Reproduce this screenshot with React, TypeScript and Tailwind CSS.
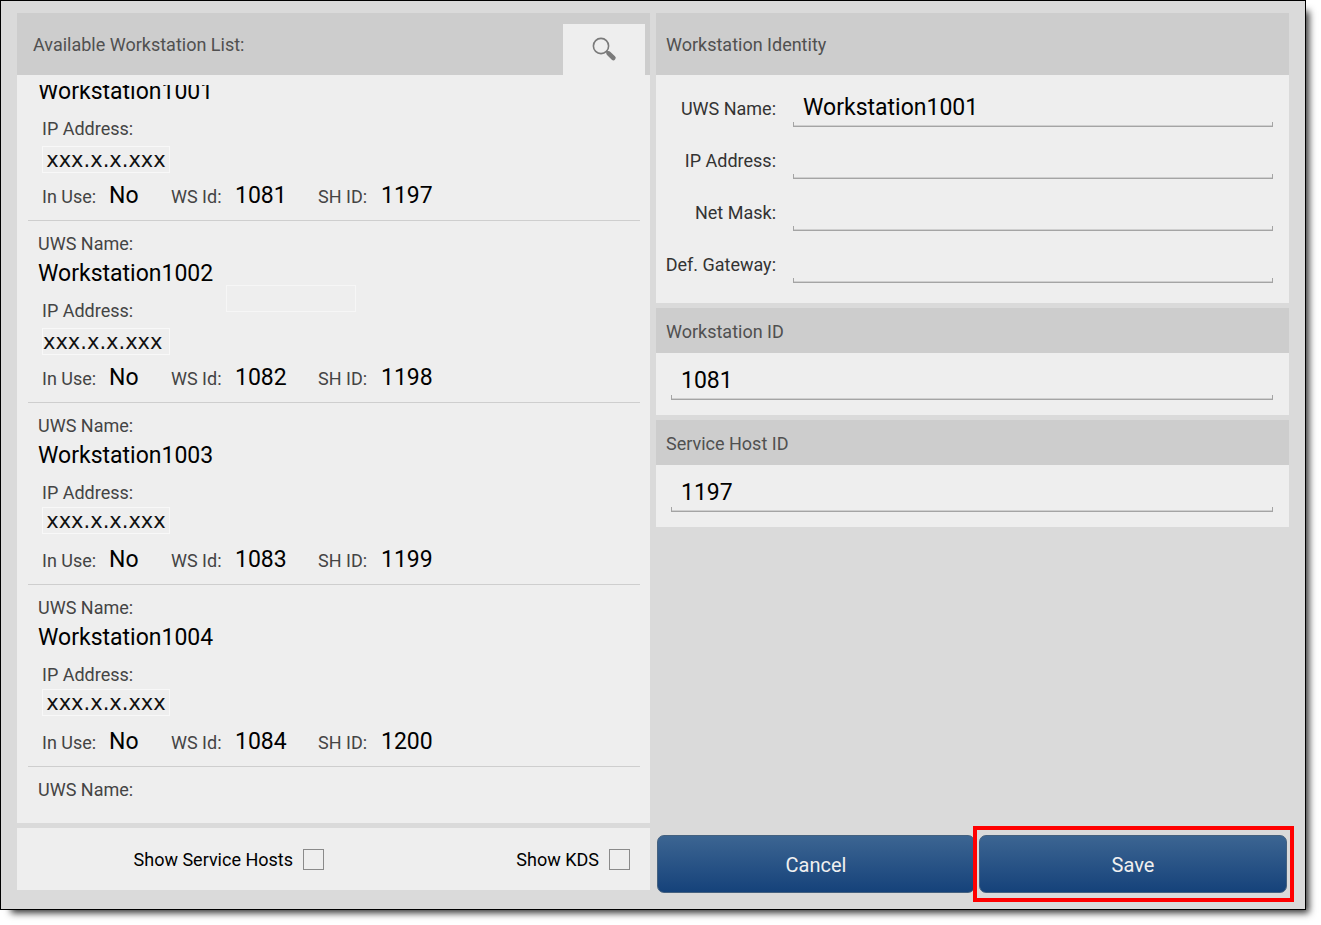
import React, { useState } from 'react';
import { clsx } from 'clsx';

interface Workstation {
  name: string;
  wsId: string;
  shId: string;
  ipClass: string;
  hasPatch?: boolean;
}

const WORKSTATIONS: Workstation[] = [
  { name: 'Workstation1001', wsId: '1081', shId: '1197', ipClass: 'self-end justify-center' },
  { name: 'Workstation1002', wsId: '1082', shId: '1198', ipClass: 'self-end justify-start', hasPatch: true },
  { name: 'Workstation1003', wsId: '1083', shId: '1199', ipClass: 'self-start justify-center' },
  { name: 'Workstation1004', wsId: '1084', shId: '1200', ipClass: 'self-start justify-center' },
];

const SearchIcon: React.FC = () => (
  <svg width="26" height="26" viewBox="0 0 26 26" fill="none" stroke="#7a7a7a" aria-hidden="true">
    <circle cx="10" cy="9" r="7.6" strokeWidth="1.6" />
    <path d="M15.4 14.2l2.4 2.2" strokeWidth="2" />
    <path d="M17.6 16.4l4.8 4.6" strokeWidth="4.6" strokeLinecap="round" />
  </svg>
);

// The first row is scrolled so that only the lower part of its name shows.
const WorkstationItem: React.FC<{ item: Workstation; isFirst: boolean }> = ({ item, isFirst }) => (
  <li
    className={clsx(
      'relative flex flex-col border-b border-[#cecece] pl-[10px]',
      isFirst ? 'h-[146px]' : 'h-[182px] pt-[11px]',
    )}
  >
    {!isFirst && <span className="h-[25px] text-lg leading-6 text-[#444]">UWS Name:</span>}
    <span className="h-8 pt-px text-[23px] leading-8 text-black">{item.name}</span>
    <div className="flex flex-col pl-1">
      <span className="mt-2 h-7 text-lg leading-7 text-[#444]">IP Address:</span>
      <div className="flex h-[30px]">
        <span
          className={clsx(
            'flex h-[27px] w-32 items-center border border-[#f8f8f8] font-["DejaVu_Sans",sans-serif] text-[21px] leading-6 text-[#111]',
            item.ipClass,
          )}
        >
          xxx.x.x.xxx
        </span>
      </div>
      <div className="mt-[7px] grid grid-cols-[67px_62px_64px_83px_63px_1fr] items-baseline text-lg leading-8 text-[#444]">
        <span>In Use:</span>
        <span className="text-[23px] leading-8 text-black">No</span>
        <span>WS Id:</span>
        <span className="text-[23px] leading-8 text-black">{item.wsId}</span>
        <span>SH ID:</span>
        <span className="text-[23px] leading-8 text-black">{item.shId}</span>
      </div>
    </div>
    {item.hasPatch && (
      <div className="absolute left-[198px] top-16 h-[27px] w-[130px] border border-[#f6f6f6]" />
    )}
  </li>
);

interface LineInputProps {
  id: string;
  value: string;
  onChange: (value: string) => void;
}

const LineInput: React.FC<LineInputProps> = ({ id, value, onChange }) => (
  <div className="relative h-10 min-w-0 flex-1">
    <input
      id={id}
      type="text"
      value={value}
      onChange={(e) => onChange(e.target.value)}
      className="h-10 w-full border-b border-[#a4a4a4] bg-transparent px-[10px] pt-[2px] text-[23px] text-black shadow-[inset_0_-1px_0_#cfcfcf] outline-none"
    />
    <div className="pointer-events-none absolute inset-x-0 bottom-0 h-[5px] border-x border-[#a4a4a4]" />
  </div>
);

const App: React.FC = () => {
  const [identity, setIdentity] = useState({
    name: 'Workstation1001',
    ip: '',
    mask: '',
    gateway: '',
  });
  const [wsId, setWsId] = useState('1081');
  const [hostId, setHostId] = useState('1197');
  const [showHosts, setShowHosts] = useState(false);
  const [showKds, setShowKds] = useState(false);

  const identityFields = [
    { key: 'name', label: 'UWS Name:' },
    { key: 'ip', label: 'IP Address:' },
    { key: 'mask', label: 'Net Mask:' },
    { key: 'gateway', label: 'Def. Gateway:' },
  ] as const;

  const filters = [
    { id: 'show-hosts', label: 'Show Service Hosts', checked: showHosts, set: setShowHosts },
    { id: 'show-kds', label: 'Show KDS', checked: showKds, set: setShowKds },
  ];

  const idPanels = [
    { id: 'ws-id', label: 'Workstation ID', value: wsId, set: setWsId },
    { id: 'host-id', label: 'Service Host ID', value: hostId, set: setHostId },
  ];

  return (
    <div className="flex h-screen bg-white pb-[15px] pr-[15px] font-[Roboto,sans-serif]">
      <main className="grid min-w-0 flex-1 grid-cols-2 gap-[6px] border border-black bg-[#dadada] px-4 pt-3 shadow-[7px_7px_7px_-4px_rgba(0,0,0,0.8)]">
        {/* Workstation list */}
        <div className="flex min-h-0 flex-col gap-[5px] pb-[19px]">
          <section className="flex min-h-0 flex-1 flex-col bg-[#eee]">
            <header className="flex h-[62px] shrink-0 items-end justify-between bg-[#cdcdcd] pl-4 pr-[5px]">
              <h2 className="self-center pt-[2px] text-lg text-[#505050]">Available Workstation List:</h2>
              <button type="button" aria-label="Search" className="flex h-[51px] w-[82px] items-center justify-center bg-[#eee]">
                <SearchIcon />
              </button>
            </header>
            <div className="mb-[15px] ml-[11px] mr-[10px] mt-[10px] min-h-0 flex-1 overflow-hidden">
              <ul className="-mt-[10px]">
                {WORKSTATIONS.map((item, index) => (
                  <WorkstationItem key={item.name} item={item} isFirst={index === 0} />
                ))}
                <li className="flex pl-[10px] pt-[11px] text-lg leading-6 text-[#444]">UWS Name:</li>
              </ul>
            </div>
          </section>
          <div className="grid h-[62px] shrink-0 grid-cols-2 bg-[#eee] pl-[11px] pr-[10px]">
            {filters.map((filter) => (
              <label key={filter.id} htmlFor={filter.id} className="flex items-center justify-end gap-[10px] pr-[10px] text-lg text-black">
                <span className="pt-[2px]">{filter.label}</span>
                <input
                  id={filter.id}
                  type="checkbox"
                  checked={filter.checked}
                  onChange={(e) => filter.set(e.target.checked)}
                  className="size-[21px] appearance-none border border-[#8a8a8a] bg-[#eee] checked:bg-[#3b6491]"
                />
              </label>
            ))}
          </div>
        </div>

        {/* Selected workstation */}
        <div className="flex min-h-0 flex-col gap-[5px] pb-4">
          <section className="bg-[#eee] pb-5">
            <header className="flex h-[62px] items-center bg-[#cdcdcd] pl-[10px] pt-[2px]">
              <h2 className="text-lg text-[#505050]">Workstation Identity</h2>
            </header>
            {identityFields.map((field) => (
              <div key={field.key} className="flex h-[52px] items-end pr-4">
                <label htmlFor={field.key} className="mr-[17px] w-[120px] text-right text-lg leading-9 text-[#333]">
                  {field.label}
                </label>
                <LineInput
                  id={field.key}
                  value={identity[field.key]}
                  onChange={(value) => setIdentity({ ...identity, [field.key]: value })}
                />
              </div>
            ))}
          </section>
          {idPanels.map((panel) => (
            <section key={panel.id} className="bg-[#eee]">
              <header className="flex h-[45px] items-center bg-[#cdcdcd] pl-[10px] pt-[2px]">
                <label htmlFor={panel.id} className="text-lg text-[#505050]">{panel.label}</label>
              </header>
              <div className="flex pb-[15px] pl-[15px] pr-4 pt-[7px]">
                <LineInput id={panel.id} value={panel.value} onChange={panel.set} />
              </div>
            </section>
          ))}
          <div className="mt-auto grid grid-cols-[318fr_308fr] gap-1 pl-px pr-[2px]">
            <button
              type="button"
              className="h-[58px] rounded-[7px] border border-[#45617f] bg-linear-to-b from-[#3c6592] to-[#15427a] pt-[2px] text-xl text-[#f0f0f0]"
            >
              Cancel
            </button>
            <div className="relative flex">
              <button
                type="button"
                className="h-[58px] flex-1 rounded-[7px] border border-[#45617f] bg-linear-to-b from-[#3c6592] to-[#15427a] pt-[2px] text-xl text-[#f0f0f0]"
              >
                Save
              </button>
              <div className="pointer-events-none absolute -inset-y-[9px] -left-[6px] -right-[7px] border-4 border-[#f00]" />
            </div>
          </div>
        </div>
      </main>
    </div>
  );
};

export default App;
